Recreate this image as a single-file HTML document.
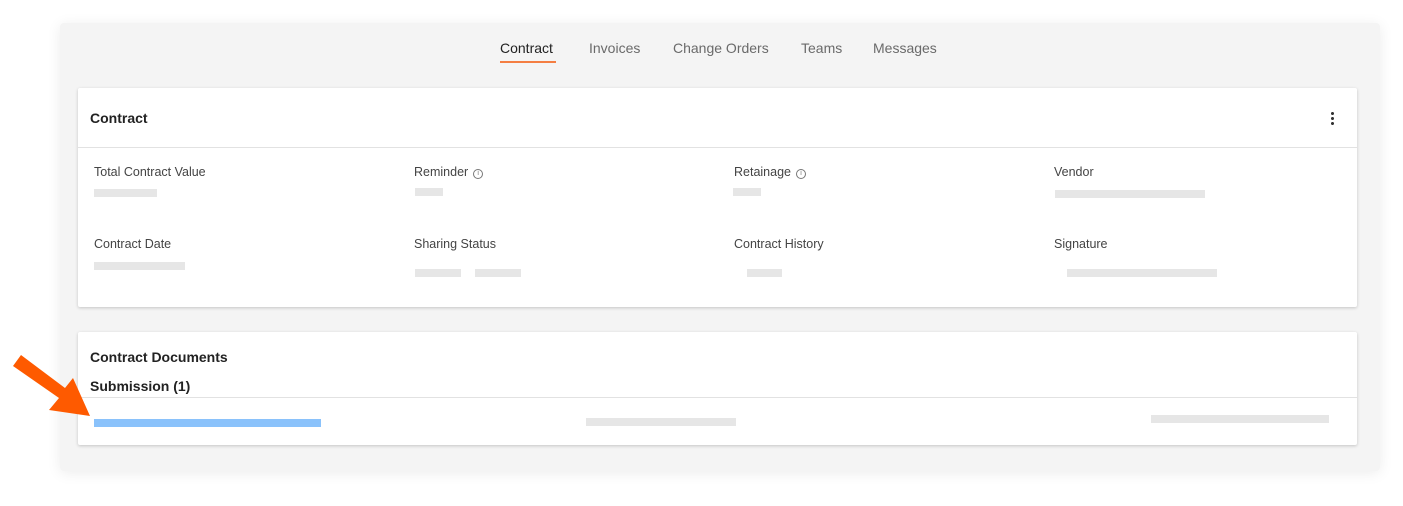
<!DOCTYPE html>
<html><head><style>
body{margin:0;width:1403px;height:506px;background:#fff;font-family:"Liberation Sans",sans-serif;position:relative;overflow:hidden}
.panel{position:absolute;left:60px;top:23px;width:1320px;height:448px;background:#f4f4f4;box-shadow:0 2px 14px rgba(0,0,0,.08);border-radius:4px}
.tab{position:absolute;top:40px;font-size:14px;color:#6a6a6a}
.card{position:absolute;left:78px;width:1279px;background:#fff;box-shadow:0 1px 3px rgba(0,0,0,.2);border-radius:2px}
.t{position:absolute;font-size:14px;font-weight:bold;color:#222}
.l{position:absolute;font-size:12.5px;color:#444}
.b{position:absolute;height:8px;background:#e6e6e6}
.i{display:inline-block;width:8px;height:8px;border:1px solid #777;border-radius:50%;font-size:7px;line-height:8px;text-align:center;margin-left:5px;vertical-align:1px;color:#777}
</style></head><body>
<div class="panel"></div>
<div class="tab" style="left:500px;color:#222">Contract</div>
<div style="position:absolute;left:500px;top:61px;width:56px;height:2px;background:#f47e42"></div>
<div class="tab" style="left:589px">Invoices</div>
<div class="tab" style="left:673px">Change Orders</div>
<div class="tab" style="left:801px">Teams</div>
<div class="tab" style="left:873px">Messages</div>

<div class="card" style="top:88px;height:219px"></div>
<div class="t" style="left:90px;top:110px">Contract</div>
<div style="position:absolute;left:1331px;top:111px;width:3px;height:14px;background:radial-gradient(circle,#333 1.4px,transparent 1.6px) 0 0/3px 5px"></div>
<div style="position:absolute;left:78px;top:147px;width:1279px;height:1px;background:#e2e2e2"></div>
<div class="l" style="left:94px;top:165px">Total Contract Value</div>
<div class="l" style="left:414px;top:165px">Reminder<span class="i">i</span></div>
<div class="l" style="left:734px;top:165px">Retainage<span class="i">i</span></div>
<div class="l" style="left:1054px;top:165px">Vendor</div>
<div class="b" style="left:94px;top:189px;width:63px"></div>
<div class="b" style="left:415px;top:188px;width:28px"></div>
<div class="b" style="left:733px;top:188px;width:28px"></div>
<div class="b" style="left:1055px;top:190px;width:150px"></div>
<div class="l" style="left:94px;top:237px">Contract Date</div>
<div class="l" style="left:414px;top:237px">Sharing Status</div>
<div class="l" style="left:734px;top:237px">Contract History</div>
<div class="l" style="left:1054px;top:237px">Signature</div>
<div class="b" style="left:94px;top:262px;width:91px"></div>
<div class="b" style="left:415px;top:269px;width:46px"></div>
<div class="b" style="left:475px;top:269px;width:46px"></div>
<div class="b" style="left:747px;top:269px;width:35px"></div>
<div class="b" style="left:1067px;top:269px;width:150px"></div>

<div class="card" style="top:332px;height:113px"></div>
<div class="t" style="left:90px;top:349px">Contract Documents</div>
<div class="t" style="left:90px;top:378px">Submission (1)</div>
<div style="position:absolute;left:78px;top:397px;width:1279px;height:1px;background:#e2e2e2"></div>
<div style="position:absolute;left:94px;top:419px;width:227px;height:8px;background:#8ac2fb"></div>
<div class="b" style="left:586px;top:418px;width:150px"></div>
<div class="b" style="left:1151px;top:415px;width:178px"></div>

<svg style="position:absolute;left:0;top:340px" width="110" height="100">
<polygon points="21,15 13,26 59,58 49,70 90,76 73,38 65,48" fill="#fe5a00"/>
</svg>
</body></html>
